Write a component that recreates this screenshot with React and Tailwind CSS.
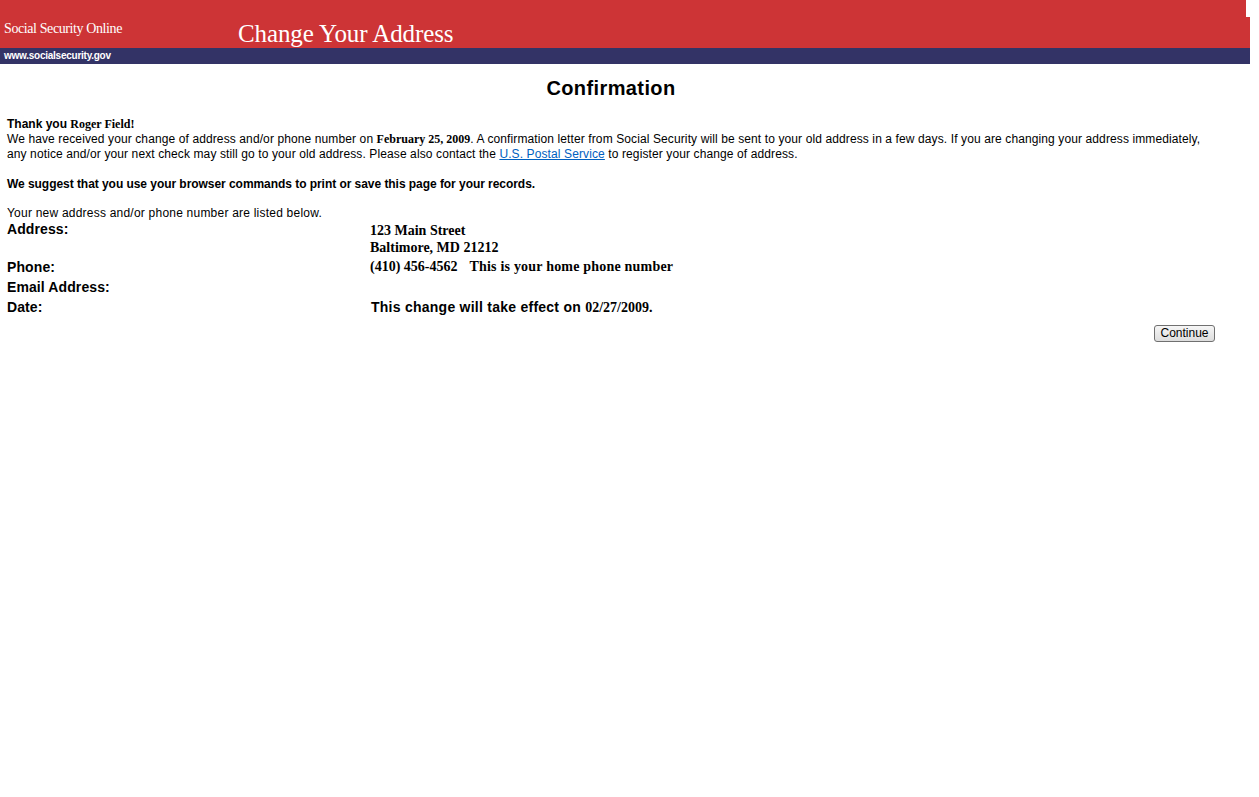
import React from "react"

const sans = "font-['Liberation_Sans',Arial,sans-serif]"
const serif = "font-['Liberation_Serif','Times_New_Roman',serif]"

function Header() {
    return (
        <div className="w-[1250px]">
            <div className="flex h-[48px]">
                <div className="flex w-[1246px] bg-[#cd3436] text-white">
                    <div className={`${serif} w-[238px] pl-[4px] pt-[21px] text-[14px] leading-[16px] tracking-[-0.4px]`}>Social Security Online</div>
                    <div className={`${serif} pt-[20px] text-[25px] leading-[28px] tracking-[-0.1px]`}>Change Your Address</div>
                </div>
                <div className="flex w-[4px] flex-col">
                    <div className="h-[17px] bg-white"></div>
                    <div className="flex-1 bg-[#cd3436]"></div>
                </div>
            </div>
            <div className={`${sans} h-[16px] bg-[#333366] pl-[4px] text-[10px] font-bold leading-[16px] tracking-[-0.25px] text-white`}>www.socialsecurity.gov</div>
        </div>
    )
}

function Row({ label, labelClass = "leading-[18px]", children }) {
    return (
        <>
            <div className={`${sans} ${labelClass} py-[1px] text-[14px] font-bold tracking-[0.1px] text-black`}>{label}</div>
            <div className="py-[1px] text-black">{children}</div>
        </>
    )
}

export default function App() {
    return (
        <div className="min-h-[797px] bg-white">
            <Header />
            <div className={`${sans} ml-[7px] w-[1208px] text-black`}>
                <h1 className="mt-[12px] text-center text-[20px] font-bold leading-[24px] tracking-[0.4px]">Confirmation</h1>

                <div className="mt-[17px] text-[12px] leading-[15px]">
                    <p className="font-bold">Thank you <span className={serif}>Roger Field!</span></p>
                    <p className="tracking-[0.11px]">
                        We have received your change of address and/or phone number on <b className={`${serif} tracking-normal`}>February 25, 2009</b>. A confirmation letter from Social Security will be sent to your old address in a few days. If you are changing your address immediately, any notice and/or your next check may still go to your old address. Please also contact the <a href="#" className="text-[#0060c0] underline">U.S. Postal Service</a> to register your change of address.
                    </p>
                    <p className="mt-[15px] font-bold tracking-[-0.05px]">We suggest that you use your browser commands to print or save this page for your records.</p>
                    <p className="mt-[14px] tracking-[0.22px]">Your new address and/or phone number are listed below.</p>
                </div>

                <div className="grid grid-cols-[363px_1fr] items-start">
                    <Row label="Address:" labelClass="leading-[15px]">
                        <div className={`${serif} text-[14px] font-bold leading-[17px]`}>
                            <div>123 Main Street</div>
                            <div>Baltimore, MD 21212</div>
                        </div>
                    </Row>
                    <Row label="Phone:">
                        <div className={`${serif} flex gap-[12px] text-[14px] font-bold leading-[18px]`}>
                            <span>(410) 456-4562</span>
                            <span className="tracking-[0.2px]">This is your home phone number</span>
                        </div>
                    </Row>
                    <Row label="Email Address:">
                        <div className="h-[18px]"></div>
                    </Row>
                    <Row label="Date:">
                        <div className="pl-[1px] text-[14px] font-bold leading-[18px] tracking-[0.25px]">
                            This change will take effect on <span className={`${serif} tracking-normal`}>02/27/2009.</span>
                        </div>
                    </Row>
                </div>

                <div className="mt-[7px] flex justify-end">
                    <button className="h-[17px] w-[61px] rounded-[3px] border border-[#707070] bg-gradient-to-b from-[#f6f6f6] to-[#dddddd] text-[12px] leading-[15px] text-black">Continue</button>
                </div>
            </div>
        </div>
    )
}
